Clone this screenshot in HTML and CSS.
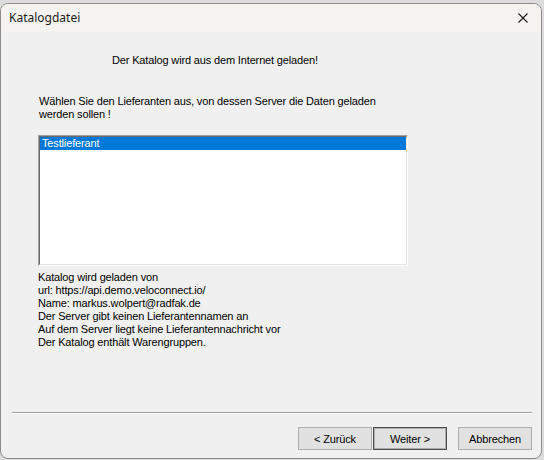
FILE: index.html
```html
<!DOCTYPE html>
<html lang="de">
<head>
<meta charset="utf-8">
<title>Katalogdatei</title>
<link rel="stylesheet" href="styles.css">
</head>
<body>
<div class="window">
  <div class="titlebar">
    <span class="title">Katalogdatei</span>
    <button class="close" aria-label="Schließen">
      <svg width="10" height="10" viewBox="0 0 10 10"><path d="M0.5 0.5 L9.5 9.5 M9.5 0.5 L0.5 9.5" stroke="#1a1a1a" stroke-width="1.1" fill="none"/></svg>
    </button>
  </div>
  <div class="client">
    <p class="heading">Der Katalog wird aus dem Internet geladen!</p>
    <p class="prompt">Wählen Sie den Lieferanten aus, von dessen Server die Daten geladen<br>werden sollen !</p>
    <div class="listbox">
      <div class="listbox-inner">
        <div class="item selected">Testlieferant</div>
      </div>
    </div>
    <div class="info">
      <div>Katalog wird geladen von</div>
      <div>url: https://api.demo.veloconnect.io/</div>
      <div>Name: markus.wolpert@radfak.de</div>
      <div>Der Server gibt keinen Lieferantennamen an</div>
      <div>Auf dem Server liegt keine Lieferantennachricht vor</div>
      <div>Der Katalog enthält Warengruppen.</div>
    </div>
    <div class="footer">
      <div class="separator"></div>
      <div class="buttons">
        <div class="nav">
          <button class="btn">&lt; Zurück</button>
          <button class="btn default">Weiter &gt;</button>
        </div>
        <button class="btn">Abbrechen</button>
      </div>
    </div>
  </div>
</div>
</body>
</html>
```
FILE: styles.css
```css
html, body {
  margin: 0;
  padding: 0;
}

body {
  width: 544px;
  height: 460px;
  background: #dcdcdc;
  overflow: hidden;
  font-family: "Liberation Sans", Arial, sans-serif;
  font-size: 11px;
  color: #000;
}

.window {
  box-sizing: border-box;
  margin-top: 3px;
  width: 542px;
  height: 456px;
  border: 1px solid #8c8c8c;
  border-radius: 8px;
  background: #f0f0f0;
  display: flex;
  flex-direction: column;
  overflow: hidden;
}

.titlebar {
  height: 28px;
  flex: none;
  display: flex;
  align-items: center;
  justify-content: space-between;
  background: #f4f3ef;
  padding-left: 8px;
}

.title {
  font-family: "Noto Sans", "Open Sans", sans-serif;
  font-size: 12px;
  color: #1a1a1a;
  margin-top: -1px;
}

.close {
  width: 46px;
  height: 28px;
  border: 0;
  background: transparent;
  display: flex;
  align-items: center;
  justify-content: center;
  padding: 0;
  margin-right: -5px;
}

.client {
  flex: 1;
  display: flex;
  flex-direction: column;
  padding: 0 0 0 37px;
  line-height: 13px;
  letter-spacing: -0.15px;
}

.client p {
  margin: 0;
}

.heading {
  margin-top: 22px !important;
  padding-left: 74px;
}

.prompt {
  margin-top: 28px !important;
  padding-left: 1px;
}

.listbox {
  margin-top: 14px;
  width: 370px;
  height: 131px;
  box-sizing: border-box;
  border-style: solid;
  border-width: 1px;
  border-color: #a0a0a0 #ffffff #ffffff #a0a0a0;
  background: #fff;
}

.listbox-inner {
  height: 100%;
  box-sizing: border-box;
  border-style: solid;
  border-width: 1px;
  border-color: #696969 #e3e3e3 #e3e3e3 #696969;
}

.item {
  height: 13px;
  line-height: 13px;
  padding-left: 2px;
}

.item.selected {
  background: #0078d7;
  color: #fff;
}

.info {
  margin-top: 5px;
}

.footer {
  margin-top: auto;
  margin-left: -26px;
  padding-bottom: 8px;
}

.separator {
  width: 520px;
  height: 1px;
  background: #a0a0a0;
  border-bottom: 1px solid #ffffff;
}

.buttons {
  margin-top: 13px;
  display: flex;
  justify-content: flex-end;
  gap: 11px;
  padding-right: 9px;
}

.nav {
  display: flex;
  gap: 1px;
}

.btn {
  box-sizing: border-box;
  width: 74px;
  height: 23px;
  border: 1px solid #adadad;
  background: #e1e1e1;
  font-family: "Liberation Sans", Arial, sans-serif;
  font-size: 11px;
  letter-spacing: -0.15px;
  color: #000;
  padding: 0;
}

.btn.default {
  border: 1px solid #4d4d4d;
  box-shadow: inset 0 0 0 1px #adadad;
}
```
